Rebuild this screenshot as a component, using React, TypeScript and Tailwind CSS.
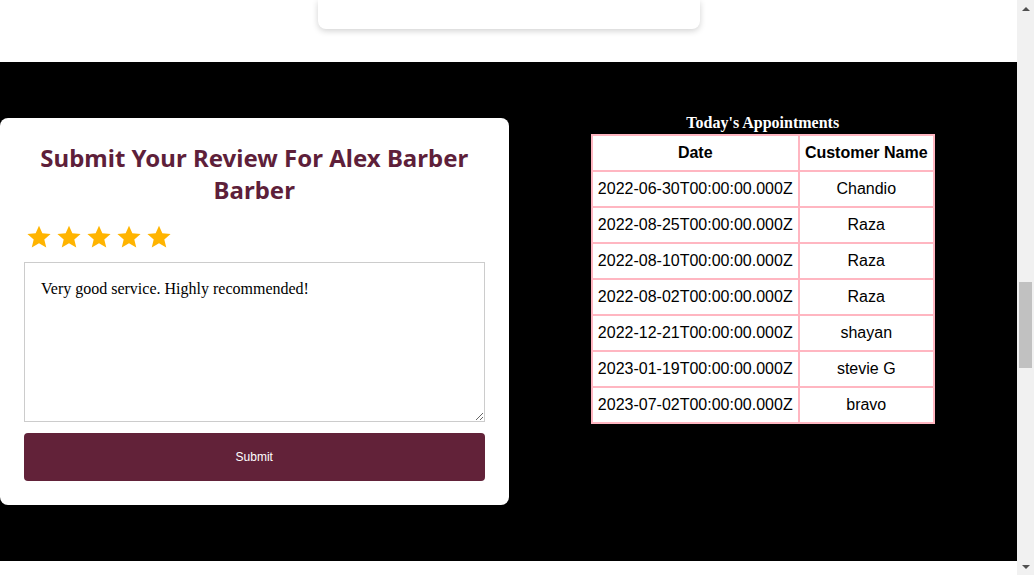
import { useState } from "react";

const appointments = [
  { date: "2022-06-30T00:00:00.000Z", name: "Chandio" },
  { date: "2022-08-25T00:00:00.000Z", name: "Raza" },
  { date: "2022-08-10T00:00:00.000Z", name: "Raza" },
  { date: "2022-08-02T00:00:00.000Z", name: "Raza" },
  { date: "2022-12-21T00:00:00.000Z", name: "shayan" },
  { date: "2023-01-19T00:00:00.000Z", name: "stevie G" },
  { date: "2023-07-02T00:00:00.000Z", name: "bravo" },
];

function Star() {
  return (
    <svg width="26" height="26" viewBox="0 0 24 24" className="fill-[#ffb400]">
      <path d="M12 1.5l3.1 7.1 7.6.6-5.8 5 1.8 7.5L12 17.7l-6.7 4 1.8-7.5-5.8-5 7.6-.6z" />
    </svg>
  );
}

function Scrollbar() {
  return (
    <div className="w-[17px] shrink-0 bg-[#f1f1f1] flex flex-col items-center h-[575px]">
      <div className="h-[17px] flex items-center justify-center">
        <div className="w-0 h-0 border-l-[4px] border-r-[4px] border-b-[4px] border-l-transparent border-r-transparent border-b-[#505050]" />
      </div>
      <div className="mt-[265px] w-[13px] h-[86px] bg-[#c1c1c1]" />
      <div className="mt-auto h-[17px] flex items-center justify-center">
        <div className="w-0 h-0 border-l-[4px] border-r-[4px] border-t-[4px] border-l-transparent border-r-transparent border-t-[#505050]" />
      </div>
    </div>
  );
}

export default function App() {
  const [review, setReview] = useState("Very good service. Highly recommended!");

  return (
    <div className="flex h-[575px] overflow-hidden bg-white">
      <div className="flex-1 min-w-0">
        {/* card above, only its bottom is visible */}
        <div className="h-[62px] flex justify-center">
          <div className="w-[382px] h-[29px] bg-white rounded-b-lg shadow-[0_2px_6px_rgba(0,0,0,0.18)]" />
        </div>

        <section className="bg-black grid grid-cols-2 py-[56px]">
          {/* review card */}
          <div className="bg-white rounded-lg px-6 pt-6 pb-6">
            <h2 className="text-center text-[#5e1f3a] text-[24px] leading-[32px] font-bold px-2" style={{ fontFamily: '"Comic Sans MS", "Noto Sans", sans-serif' }}>
              Submit Your Review For Alex Barber Barber
            </h2>
            <div className="flex gap-1 mt-[18px] ml-[2px]">
              {[0, 1, 2, 3, 4].map((i) => (
                <Star key={i} />
              ))}
            </div>
            <textarea
              value={review}
              onChange={(e) => setReview(e.target.value)}
              className="mt-3 block w-full h-[160px] border border-[#cccccc] px-4 pt-[14px] pb-4 text-[16px] text-black outline-none"
              style={{ fontFamily: '"Liberation Serif", serif' }}
            />
            <button
              className="mt-[11px] w-full h-12 rounded bg-[#622239] text-white text-[12px] font-normal"
              style={{ fontFamily: '"Liberation Sans", Arial, sans-serif' }}
            >
              Submit
            </button>
          </div>

          {/* appointments */}
          <div className="flex flex-col items-center -mt-[4px]">
            <h3 className="text-white text-[16px] font-bold leading-[18px] mb-[2px]" style={{ fontFamily: '"Liberation Serif", serif' }}>
              Today's Appointments
            </h3>
            <table className="border-collapse bg-white text-black text-[16px]" style={{ fontFamily: '"Liberation Sans", Arial, sans-serif' }}>
              <thead>
                <tr>
                  <th className="border-2 border-[#ffb6c1] px-[5px] py-2 leading-[18px] w-[207px] font-bold">Date</th>
                  <th className="border-2 border-[#ffb6c1] px-[5px] py-2 leading-[18px] w-[135px] font-bold">Customer Name</th>
                </tr>
              </thead>
              <tbody>
                {appointments.map((a, i) => (
                  <tr key={i}>
                    <td className="border-2 border-[#ffb6c1] px-[5px] py-2 leading-[18px] text-center">{a.date}</td>
                    <td className="border-2 border-[#ffb6c1] px-[5px] py-2 leading-[18px] text-center">{a.name}</td>
                  </tr>
                ))}
              </tbody>
            </table>
          </div>
        </section>
      </div>
      <Scrollbar />
    </div>
  );
}
